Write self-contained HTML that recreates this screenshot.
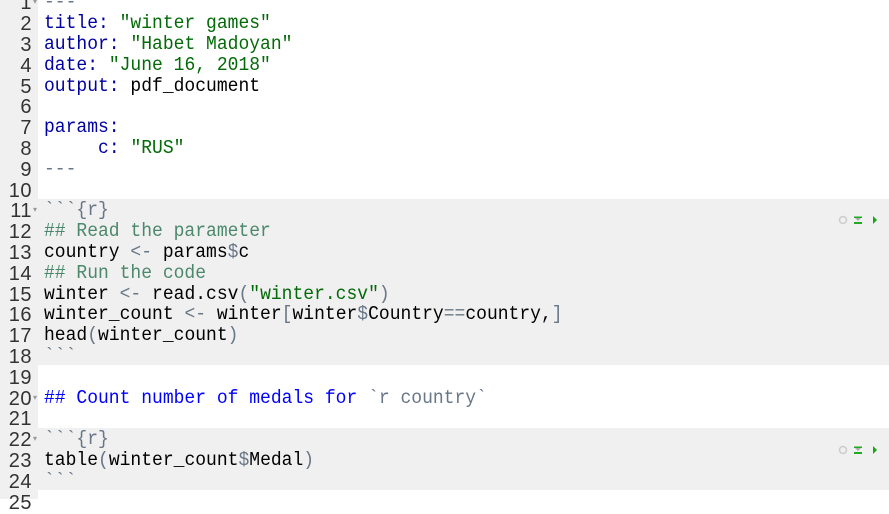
<!DOCTYPE html>
<html><head><meta charset="utf-8"><style>
html,body{margin:0;padding:0;width:889px;height:499px;overflow:hidden;background:#fff}
.g{position:absolute;left:0;top:0;width:38px;height:499px;background:#f0f0f0}
.ch{position:absolute;left:0;width:889px;background:#f0f0f0}
.l{position:absolute;left:0;height:20.8px;line-height:20.8px;font-family:"Liberation Mono",monospace;font-size:18px;white-space:pre;color:#000;margin-top:2.5px}
.n{position:absolute;left:0;width:32px;text-align:right;color:#333;font-family:"Liberation Sans",sans-serif;font-size:20px;letter-spacing:0.5px}
.c{position:absolute;left:44px;transform:scaleY(1.1);transform-origin:0 60%}
.k{color:#0000a0}.s{color:#036a07}.cm{color:#4c886b}.o{color:#687687}.h{color:#0000ff}
.f{position:absolute;left:33px;font-size:8px;color:#999}
.ic{position:absolute}
</style></head><body>
<div class="g"></div>
<div class="ch" style="top:199px;height:166px"></div>
<div class="ch" style="top:428px;height:62px"></div>

<div class="l" style="top:-9.2px"><span class="n">1</span><span class="f">▾</span><span class="c o">---</span></div>
<div class="l" style="top:11.6px"><span class="n">2</span><span class="c"><span class="k">title:</span> <span class="s">"winter games"</span></span></div>
<div class="l" style="top:32.4px"><span class="n">3</span><span class="c"><span class="k">author:</span> <span class="s">"Habet Madoyan"</span></span></div>
<div class="l" style="top:53.2px"><span class="n">4</span><span class="c"><span class="k">date:</span> <span class="s">"June 16, 2018"</span></span></div>
<div class="l" style="top:74px"><span class="n">5</span><span class="c"><span class="k">output:</span> pdf_document</span></div>
<div class="l" style="top:94.8px"><span class="n">6</span></div>
<div class="l" style="top:115.6px"><span class="n">7</span><span class="c k">params:</span></div>
<div class="l" style="top:136.4px"><span class="n">8</span><span class="c">     <span class="k">c:</span> <span class="s">"RUS"</span></span></div>
<div class="l" style="top:157.2px"><span class="n">9</span><span class="c o">---</span></div>
<div class="l" style="top:178px"><span class="n">10</span></div>
<div class="l" style="top:198.8px"><span class="n">11</span><span class="f">▾</span><span class="c o">&#96;&#96;&#96;{r}</span></div>
<div class="l" style="top:219.6px"><span class="n">12</span><span class="c cm">## Read the parameter</span></div>
<div class="l" style="top:240.4px"><span class="n">13</span><span class="c">country <span class="o">&lt;-</span> params<span class="o">$</span>c</span></div>
<div class="l" style="top:261.2px"><span class="n">14</span><span class="c cm">## Run the code</span></div>
<div class="l" style="top:282px"><span class="n">15</span><span class="c">winter <span class="o">&lt;-</span> read.csv<span class="o">(</span><span class="s">"winter.csv"</span><span class="o">)</span></span></div>
<div class="l" style="top:302.8px"><span class="n">16</span><span class="c">winter_count <span class="o">&lt;-</span> winter<span class="o">[</span>winter<span class="o">$</span>Country<span class="o">==</span>country,<span class="o">]</span></span></div>
<div class="l" style="top:323.6px"><span class="n">17</span><span class="c">head<span class="o">(</span>winter_count<span class="o">)</span></span></div>
<div class="l" style="top:344.4px"><span class="n">18</span><span class="c o">&#96;&#96;&#96;</span></div>
<div class="l" style="top:365.2px"><span class="n">19</span></div>
<div class="l" style="top:386px"><span class="n">20</span><span class="f">▾</span><span class="c h">## Count number of medals for <span class="o">&#96;r country&#96;</span></span></div>
<div class="l" style="top:406.8px"><span class="n">21</span></div>
<div class="l" style="top:427.6px"><span class="n">22</span><span class="f">▾</span><span class="c o">&#96;&#96;&#96;{r}</span></div>
<div class="l" style="top:448.4px"><span class="n">23</span><span class="c">table<span class="o">(</span>winter_count<span class="o">$</span>Medal<span class="o">)</span></span></div>
<div class="l" style="top:469.2px"><span class="n">24</span><span class="c o">&#96;&#96;&#96;</span></div>
<div class="l" style="top:490px"><span class="n">25</span></div>

<svg class="ic" style="left:836px;top:213px" width="45" height="14">
<circle cx="7" cy="7" r="3.5" fill="none" stroke="#ccc" stroke-width="1.5"/>
<rect x="18" y="3.5" width="8" height="1.5" fill="#2a2"/><path d="M19 5 L25 5 L22 8Z" fill="#aaa"/><rect x="18" y="9" width="8" height="2" fill="#2a2"/>
<path d="M37 3 L41 7 L37 11Z" fill="#1a1"/></svg>
<svg class="ic" style="left:836px;top:443px" width="45" height="14">
<circle cx="7" cy="7" r="3.5" fill="none" stroke="#ccc" stroke-width="1.5"/>
<rect x="18" y="3.5" width="8" height="1.5" fill="#2a2"/><path d="M19 5 L25 5 L22 8Z" fill="#aaa"/><rect x="18" y="9" width="8" height="2" fill="#2a2"/>
<path d="M37 3 L41 7 L37 11Z" fill="#1a1"/></svg>
</body></html>
